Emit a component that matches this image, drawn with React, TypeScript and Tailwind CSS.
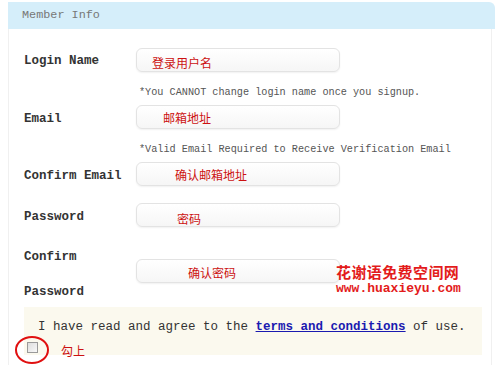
import React from "react";

const mono = { fontFamily: '"Liberation Mono", "DejaVu Sans Mono", monospace' };
const cjk = { fontFamily: '"Noto Sans CJK SC", sans-serif' };

function Field({ note, noteClass }: { note: string; noteClass: string }) {
  return (
    <div className="h-[24px] w-[204px] rounded-[6px] border border-[#e3e3e3] bg-gradient-to-b from-white to-[#f6f6f6] shadow-[0_1px_2px_rgba(0,0,0,0.06)] flex items-center">
      <span className={`text-[12px] text-[#cc1111] leading-none ${noteClass}`} style={cjk}>
        {note}
      </span>
    </div>
  );
}

export default function App() {
  return (
    <div className="w-[500px] h-[365px] bg-white overflow-hidden relative" style={mono}>
      <div className="ml-[8px] mt-[2px] w-[487px] h-[363px] flex flex-col">
        <div className="h-[27px] bg-[#d5eefa] rounded-tr-[6px] flex items-center pl-[14px] text-[11.8px] text-[#777]">
          Member Info
        </div>
        <div className="flex-1 mr-[3px] border-l border-r border-[#f0f0f0] bg-white pl-[15px] flex flex-col">
          {/* Login name */}
          <div className="mt-[19px] flex h-[24px]">
            <div className="w-[112px] text-[12.5px] font-bold text-[#333] pt-[4px]">Login Name</div>
            <Field note="登录用户名" noteClass="ml-[15px] mt-[6px]" />
          </div>
          <div className="mt-[15px] ml-[115px] text-[10.2px] text-[#555] leading-[12px]">
            *You CANNOT change login name once you signup.
          </div>
          {/* Email */}
          <div className="mt-[6px] flex h-[24px]">
            <div className="w-[112px] text-[12.5px] font-bold text-[#333] pt-[5px]">Email</div>
            <Field note="邮箱地址" noteClass="ml-[26px] mt-[2px]" />
          </div>
          <div className="mt-[15px] ml-[115px] text-[10.2px] text-[#555] leading-[12px]">
            *Valid Email Required to Receive Verification Email
          </div>
          {/* Confirm Email */}
          <div className="mt-[6px] flex h-[24px]">
            <div className="w-[112px] text-[12.5px] font-bold text-[#333] pt-[5px]">Confirm Email</div>
            <Field note="确认邮箱地址" noteClass="ml-[38px] mt-[2px]" />
          </div>
          {/* Password */}
          <div className="mt-[17px] flex h-[24px]">
            <div className="w-[112px] text-[12.5px] font-bold text-[#333] pt-[5px]">Password</div>
            <Field note="密码" noteClass="ml-[40px] mt-[8px]" />
          </div>
          {/* Confirm Password */}
          <div className="mt-[18px] flex h-[68px] relative">
            <div className="w-[112px] text-[12.5px] font-bold text-[#333] leading-[35px] mt-[-5px]">
              Confirm
              <br />
              Password
            </div>
            <div className="mt-[14px]">
              <Field note="确认密码" noteClass="ml-[51px] mt-[4px]" />
            </div>
            <div className="absolute left-[312px] top-[17px] flex flex-col text-[#e31b1b] font-bold">
              <span className="text-[15px] leading-[20px] tracking-[0.4px]" style={cjk}>花谢语免费空间网</span>
              <span className="text-[13px] leading-[14px]" style={mono}>www.huaxieyu.com</span>
            </div>
          </div>
          {/* Agree */}
          <div className="mt-[-6px] w-[458px] h-[48px] bg-[#fbf9ee] relative">
            <div className="pl-[14px] pt-[12px] text-[12.5px] text-[#333] leading-[16px] whitespace-nowrap">
              I have read and agree to the{" "}
              <a className="font-bold text-[#1a1ab0] underline">terms and conditions</a> of use.
            </div>
            <div className="absolute left-[3px] top-[35px] w-[11px] h-[11px] border border-[#9a9a9a] bg-gradient-to-br from-[#dedede] to-[#f8f8f8]" />
            <div className="absolute left-[-9px] top-[29px] w-[34px] h-[28px] rounded-[50%] border-2 border-[#e01010]" />
            <span className="absolute left-[37px] top-[38px] text-[12px] text-[#cc1111] leading-none" style={cjk}>勾上</span>
          </div>
        </div>
      </div>
    </div>
  );
}
